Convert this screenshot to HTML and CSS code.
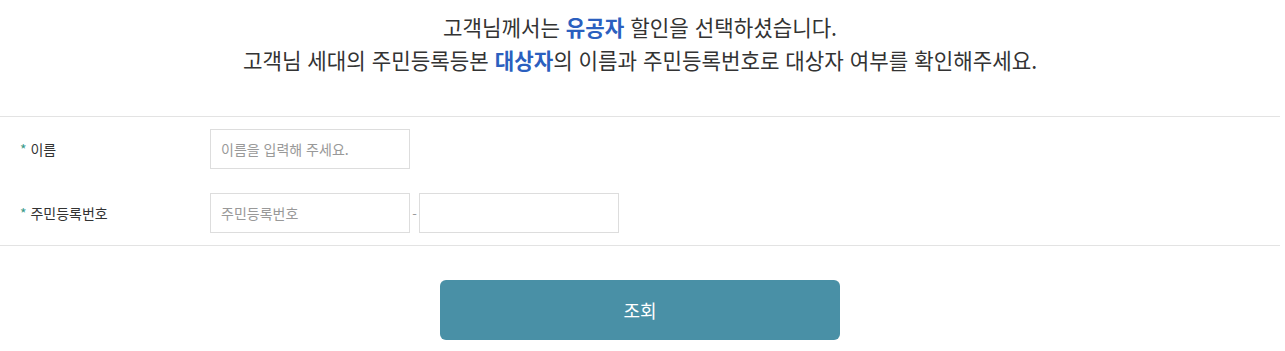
FILE: index.html
```
<!DOCTYPE html>
<html lang="ko">
<head>
    <meta charset="UTF-8" />
    <title>대상자 확인</title>
    <link rel="stylesheet" href="styles.css">
</head>
<body>

<div class="wrap">
    <div class="intro">
        <p>고객님께서는 <strong>유공자</strong> 할인을 선택하셨습니다.</p>
        <p>고객님 세대의 주민등록등본 <strong>대상자</strong>의 이름과 주민등록번호로 대상자 여부를 확인해주세요.</p>
    </div>

    <div class="form-table">
        <div class="form-row">
            <label class="form-label" for="name"><span class="req">*</span> 이름</label>
            <div class="form-field">
                <input type="text" id="name" placeholder="이름을 입력해 주세요.">
            </div>
        </div>
        <div class="form-row">
            <label class="form-label" for="rrn1"><span class="req">*</span> 주민등록번호</label>
            <div class="form-field">
                <input type="text" id="rrn1" placeholder="주민등록번호">
                <span class="dash">-</span>
                <input type="password" id="rrn2">
            </div>
        </div>
    </div>

    <div class="btn-area">
        <button type="button">조회</button>
    </div>
</div>

</body>
</html>
```

FILE: styles.css
```
/* Basic Styles */
body {
    margin: 0;
    padding: 0;
    background-color: #fff;
    font-family: "Noto Sans CJK KR", "Noto Sans", sans-serif;
    color: #333;
}

.wrap {
    width: 1280px;
}

.intro {
    text-align: center;
    padding-top: 10px;
    height: 116px;
    box-sizing: border-box;
}

.intro p {
    margin: 0;
    font-size: 21.2px;
    line-height: 33px;
    color: #333;
}

.intro strong {
    color: #2b5fbf;
    font-weight: bold;
}

/* Form rows */
.form-table {
    border-top: 1px solid #e3e3e3;
    border-bottom: 1px solid #e3e3e3;
    padding: 12px 0;
}

.form-row {
    display: flex;
    align-items: center;
    height: 40px;
}

.form-row + .form-row {
    margin-top: 24px;
}

.form-label {
    width: 190px;
    padding-left: 20px;
    font-size: 14px;
    color: #333;
}

.req {
    color: #3a9a8a;
}

.form-field {
    display: flex;
    align-items: center;
}

.form-field input {
    width: 200px;
    height: 40px;
    box-sizing: border-box;
    border: 1px solid #ddd;
    padding: 0 10px;
    font-family: inherit;
    font-size: 14px;
    color: #333;
    outline: none;
}

.form-field input::placeholder {
    color: #999;
}

.dash {
    width: 9px;
    text-align: center;
    font-size: 13px;
    color: #999;
}

/* Button */
.btn-area {
    display: flex;
    justify-content: center;
    padding-top: 34px;
}

.btn-area button {
    width: 400px;
    height: 60px;
    border: none;
    border-radius: 6px;
    background-color: #4990a6;
    color: #fff;
    font-family: inherit;
    font-size: 18px;
    cursor: pointer;
}
```
